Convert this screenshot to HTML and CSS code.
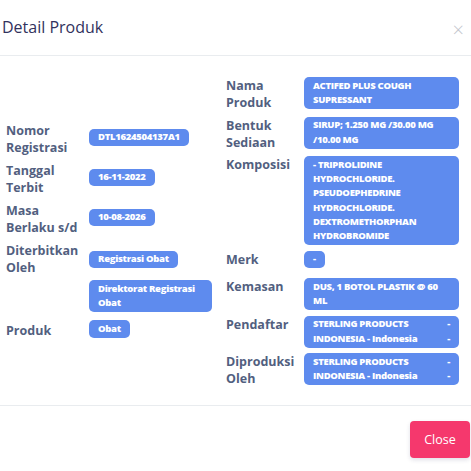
FILE: index.html
```html
<!DOCTYPE html>
<html>
<head>
<meta charset="utf-8">
<link rel="stylesheet" href="styles.css">
</head>
<body>
<div class="modal">
  <div class="modal-header">
    <h5 class="modal-title">Detail Produk</h5>
    <span class="close">&times;</span>
  </div>
  <div class="modal-body">
    <div class="col col-left">
      <div class="row">
        <div class="label">Nomor Registrasi</div>
        <div class="value"><span class="badge">DTL1624504137A1</span></div>
      </div>
      <div class="row">
        <div class="label">Tanggal Terbit</div>
        <div class="value"><span class="badge">16-11-2022</span></div>
      </div>
      <div class="row">
        <div class="label">Masa Berlaku s/d</div>
        <div class="value"><span class="badge">10-08-2026</span></div>
      </div>
      <div class="row row-top">
        <div class="label">Diterbitkan Oleh</div>
        <div class="value value-stack">
          <span class="badge">Registrasi Obat</span>
          <span class="badge">Direktorat Registrasi Obat</span>
        </div>
      </div>
      <div class="row">
        <div class="label">Produk</div>
        <div class="value"><span class="badge">Obat</span></div>
      </div>
    </div>
    <div class="col col-right">
      <div class="row">
        <div class="label">Nama Produk</div>
        <div class="value"><span class="badge">ACTIFED PLUS COUGH SUPRESSANT</span></div>
      </div>
      <div class="row">
        <div class="label">Bentuk Sediaan</div>
        <div class="value"><span class="badge">SIRUP; 1.250 MG /30.00 MG /10.00 MG</span></div>
      </div>
      <div class="row">
        <div class="label">Komposisi</div>
        <div class="value"><span class="badge">- TRIPROLIDINE HYDROCHLORIDE. PSEUDOEPHEDRINE HYDROCHLORIDE. DEXTROMETHORPHAN HYDROBROMIDE</span></div>
      </div>
      <div class="row">
        <div class="label">Merk</div>
        <div class="value"><span class="badge">-</span></div>
      </div>
      <div class="row">
        <div class="label">Kemasan</div>
        <div class="value"><span class="badge">DUS, 1 BOTOL PLASTIK @ 60 ML</span></div>
      </div>
      <div class="row">
        <div class="label">Pendaftar</div>
        <div class="value"><span class="badge badge-split"><span class="main">STERLING PRODUCTS INDONESIA - Indonesia</span><span class="dash">-<br>-</span></span></div>
      </div>
      <div class="row">
        <div class="label">Diproduksi Oleh</div>
        <div class="value"><span class="badge badge-split"><span class="main">STERLING PRODUCTS INDONESIA - Indonesia</span><span class="dash">-<br>-</span></span></div>
      </div>
    </div>
  </div>
  <div class="modal-footer">
    <button class="btn-close">Close</button>
  </div>
</div>
</body>
</html>
```

FILE: styles.css
```css
* { box-sizing: border-box; }
html, body {
  margin: 0;
  padding: 0;
  background: #ffffff;
  font-family: "Open Sans", "Noto Sans", sans-serif;
}
.modal {
  width: 471px;
  height: 471px;
  background: #fff;
}
.modal-header {
  height: 56px;
  display: flex;
  align-items: center;
  justify-content: space-between;
  padding: 0 7px 0 2px;
  border-bottom: 1px solid #e9ecef;
}
.modal-title {
  margin: 0;
  font-size: 16px;
  font-weight: 400;
  color: #32325d;
  position: relative;
  top: -1px;
}
.close {
  font-size: 20px;
  color: #c3c5cd;
  font-weight: 300;
  line-height: 1;
  position: relative;
  top: 2px;
}
.modal-body {
  display: flex;
  align-items: center;
  padding: 21px 12px 18px 6px;
  border-bottom: 1px solid #e9ecef;
}
.col {
  display: flex;
  flex-direction: column;
  gap: 6px;
}
.col-left { width: 214px; }
.col-right { flex: 1; margin-left: 6px; gap: 5.5px; }
.row {
  display: flex;
  align-items: flex-start;
}
.col-left .row { align-items: center; }
.col-left .row.row-top { align-items: flex-start; }
.label {
  font-size: 12.5px;
  font-weight: 700;
  line-height: 17px;
  color: #525f7f;
  flex: none;
}
.col-left .label { width: 83px; }
.col-right .label { width: 78px; }
.value {
  flex: 1;
  min-width: 0;
}
.col-left .value { padding-top: 2px; }
.value-stack {
  display: flex;
  flex-direction: column;
  align-items: flex-start;
  gap: 12px;
  padding-top: 9px !important;
}
.badge {
  display: inline-block;
  max-width: 100%;
  background: #5e8bee;
  color: #fff;
  font-size: 9.5px;
  font-weight: 800;
  line-height: 14.25px;
  padding: 1.75px 9px;
  border-radius: 5px;
  letter-spacing: -0.3px;
  vertical-align: top;
}
.col-right .badge { max-width: 155px; }
.col-left .badge { max-width: 123px; }
.badge-split {
  display: flex;
  justify-content: space-between;
  width: 155px;
}
.badge-split .main { width: 116px; }
.badge-split .dash { text-align: right; }
.modal-footer {
  display: flex;
  justify-content: flex-end;
  padding: 15px 1px 0 0;
}
.btn-close {
  width: 60px;
  height: 37px;
  border: none;
  border-radius: 4px;
  background: #f5386d;
  color: #fff;
  font-family: "Open Sans", "Noto Sans", sans-serif;
  font-size: 12.5px;
  font-weight: 500;
  box-shadow: 0 2px 4px rgba(50,50,93,0.15);
}
```
